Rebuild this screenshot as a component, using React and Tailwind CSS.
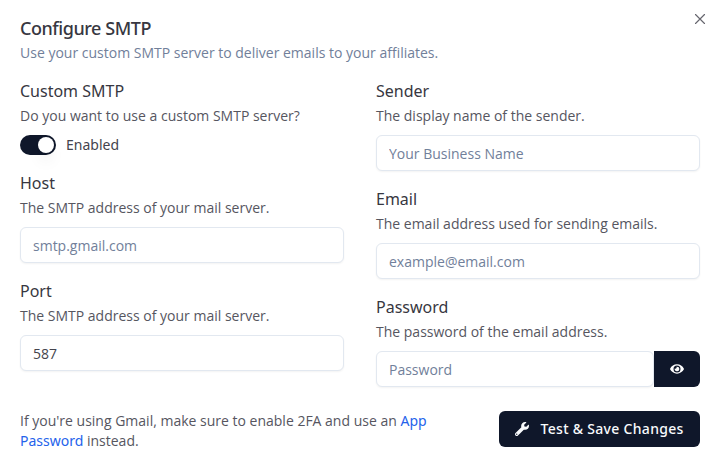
import { FaEye, FaWrench } from "react-icons/fa";

function Field({ title, hint, children }) {
  return (
    <div>
      <div className="font-['Noto_Sans',sans-serif] text-base leading-6">{title}</div>
      <div className="mt-[3px] mb-[9px] text-sm leading-5 text-[#56565f]">{hint}</div>
      {children}
    </div>
  );
}

const inputClass =
  "block h-9 w-full min-w-0 rounded-md border border-[#e2e8f0] bg-white px-3 text-sm text-[#44444d] shadow-xs outline-none placeholder:text-[#71809a]";

export default function App() {
  return (
    <div className="relative h-[472px] w-[721px] overflow-hidden bg-white px-5 pt-[19px] font-['Open_Sans',sans-serif] text-[#373741]">
      <button className="absolute top-[11px] right-[13px] text-[#66666e]" aria-label="Close">
        <svg width="16" height="16" viewBox="0 0 16 16" fill="none" stroke="currentColor" strokeWidth="1.15" strokeLinecap="round">
          <path d="M3.5 3.5 12.5 12.5M12.5 3.5 3.5 12.5" />
        </svg>
      </button>
      <h1 className="font-['Noto_Sans',sans-serif] text-lg leading-[18px] font-medium tracking-tight">Configure SMTP</h1>
      <p className="mt-1.5 text-sm leading-5 text-[#71809a]">
        Use your custom SMTP server to deliver emails to your affiliates.
      </p>
      <div className="mt-4 flex gap-8">
        <div className="flex w-[324px] flex-col gap-4">
          <Field title="Custom SMTP" hint="Do you want to use a custom SMTP server?">
            <div className="flex h-5 items-center gap-2.5 font-['Noto_Sans',sans-serif] text-sm text-[#44444d]">
              <button className="flex h-5 w-9 items-center justify-end rounded-full bg-[#0f172a] p-0.5" aria-label="Enabled">
                <span className="size-4 rounded-full bg-white shadow-lg" />
              </button>
              Enabled
            </div>
          </Field>
          <Field title="Host" hint="The SMTP address of your mail server.">
            <input className={inputClass} placeholder="smtp.gmail.com" />
          </Field>
          <Field title="Port" hint="The SMTP address of your mail server.">
            <input className={inputClass} defaultValue="587" />
          </Field>
        </div>
        <div className="flex w-[324px] flex-col gap-4">
          <Field title="Sender" hint="The display name of the sender.">
            <input className={inputClass} placeholder="Your Business Name" />
          </Field>
          <Field title="Email" hint="The email address used for sending emails.">
            <input className={inputClass} placeholder="example@email.com" />
          </Field>
          <Field title="Password" hint="The password of the email address.">
            <div className="flex">
              <input className={inputClass} placeholder="Password" />
              <button className="flex h-9 w-[46px] shrink-0 items-center justify-center rounded-r-md bg-[#0f172a] text-white" aria-label="Show">
                <FaEye size={14} />
              </button>
            </div>
          </Field>
        </div>
      </div>
      <div className="mt-6 flex items-start justify-between">
        <p className="w-[430px] text-sm leading-5 text-[#56565f]">
          If you're using Gmail, make sure to enable 2FA and use an{" "}
          <a className="font-['Noto_Sans',sans-serif] text-[#2563eb]">App<br />Password</a> instead.
        </p>
        <button className="mr-px flex h-9 w-[201px] items-center gap-[11.5px] rounded-md bg-[#0f172a] pl-4 font-['Noto_Sans',sans-serif] text-sm font-medium tracking-[0.3px] whitespace-nowrap text-[#f8fafc]">
          <FaWrench size={14} className="shrink-0" />
          Test &amp; Save Changes
        </button>
      </div>
    </div>
  );
}
